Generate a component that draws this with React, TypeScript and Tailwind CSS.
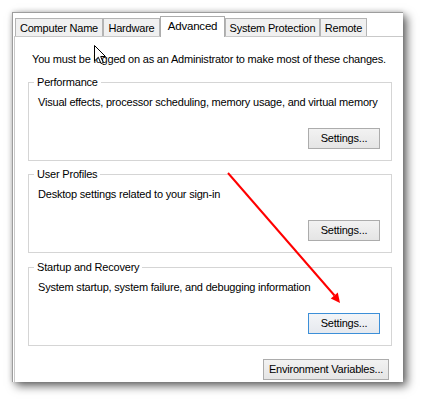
import React from "react";

const tabs = [
  { label: "Computer Name", w: 88 },
  { label: "Hardware", w: 57 },
  { label: "Advanced", w: 65, active: true },
  { label: "System Protection", w: 95 },
  { label: "Remote", w: 47 },
];

function WinButton({ label, w, focused }: { label: string; w: number; focused?: boolean }) {
  return (
    <button
      style={{ width: w }}
      className={
        "h-[21px] flex items-center justify-center text-[11px] leading-none text-black border whitespace-nowrap " +
        (focused
          ? "border-[#3c8fd8] bg-gradient-to-b from-[#f3f5f8] to-[#e6e9ee]"
          : "border-[#acacac] bg-gradient-to-b from-[#f2f2f2] to-[#e5e5e5]")
      }
    >
      {label}
    </button>
  );
}

function Group({
  title,
  desc,
  focused,
  className,
}: {
  title: string;
  desc: string;
  focused?: boolean;
  className?: string;
}) {
  return (
    <fieldset className={"w-[364px] shrink-0 border border-[#d5d5d5] pl-[5px] pr-[11px] pb-[11px] " + (className ?? "")}>
      <legend className="px-[3px] leading-[14px] text-[11px] whitespace-nowrap">{title}</legend>
      <div className="ml-[4px] mt-[6px] leading-[15px] whitespace-nowrap">{desc}</div>
      <div className="flex justify-end mt-[18px]">
        <WinButton label="Settings..." w={72} focused={focused} />
      </div>
    </fieldset>
  );
}

export default function App() {
  return (
    <div className="w-[423px] h-[403px] bg-white relative overflow-hidden font-['Liberation_Sans',Arial,sans-serif] text-[11px] tracking-[-0.2px] text-black">
      <div className="pt-[12px] pl-[12px]">
        <div className="w-[391px] h-[370px] bg-white border-l border-t border-[#9d9d9d] shadow-[4px_4px_9px_rgba(0,0,0,0.6),0_0_5px_rgba(0,0,0,0.18)] flex flex-col overflow-hidden">
          {/* Tabs */}
          <div className="h-[24px] shrink-0 flex items-end pl-[2px] relative z-10">
            {tabs.map((t) =>
              t.active ? (
                <div
                  key={t.label}
                  style={{ width: t.w }}
                  className="h-[21px] bg-white border-l border-t border-r border-[#acacac] flex items-center justify-center text-[11.5px] pb-[1px] whitespace-nowrap"
                >
                  {t.label}
                </div>
              ) : (
                <div
                  key={t.label}
                  style={{ width: t.w }}
                  className="h-[18px] mb-[1px] bg-[#f0f0f0] border-l border-t border-r border-[#b4b4b4] flex items-center justify-center pt-[1px] whitespace-nowrap"
                >
                  {t.label}
                </div>
              )
            )}
          </div>
          {/* Panel */}
          <div className="-mt-[1px] ml-[1px] flex-1 min-h-0 border-l border-t border-[#c9c9c9] bg-white pl-[13px] flex flex-col">
            <div className="ml-[4px] mt-[15px] leading-[15px] whitespace-nowrap">
              You must be logged on as an Administrator to make most of these changes.
            </div>
            <Group
              className="mt-[8px]"
              title="Performance"
              desc="Visual effects, processor scheduling, memory usage, and virtual memory"
            />
            <Group className="mt-[6px]" title="User Profiles" desc="Desktop settings related to your sign-in" />
            <Group
              className="mt-[7px]"
              title="Startup and Recovery"
              desc="System startup, system failure, and debugging information"
              focused
            />
            <div className="w-[361px] shrink-0 flex justify-end mt-[13px]">
              <WinButton label="Environment Variables..." w={126} />
            </div>
          </div>
        </div>
      </div>

      {/* Mouse cursor */}
      <svg className="absolute left-[94px] top-[45px]" width="13" height="20" viewBox="0 0 13 20">
        <path
          d="M0.5 0.5 L0.5 16 L4.3 12.3 L7 18.5 L9.3 17.5 L6.7 11.5 L11.5 11.5 Z"
          fill="white"
          stroke="black"
          strokeWidth="1"
          strokeLinejoin="miter"
        />
      </svg>

      {/* Red annotation arrow */}
      <svg className="absolute left-0 top-0 pointer-events-none" width="423" height="403" viewBox="0 0 423 403">
        <line x1="228" y1="173" x2="334.5" y2="295.5" stroke="#ff0000" strokeWidth="2" />
        <polygon points="340,303 330.8,298.4 337.8,292.4" fill="#ff0000" />
      </svg>
    </div>
  );
}
